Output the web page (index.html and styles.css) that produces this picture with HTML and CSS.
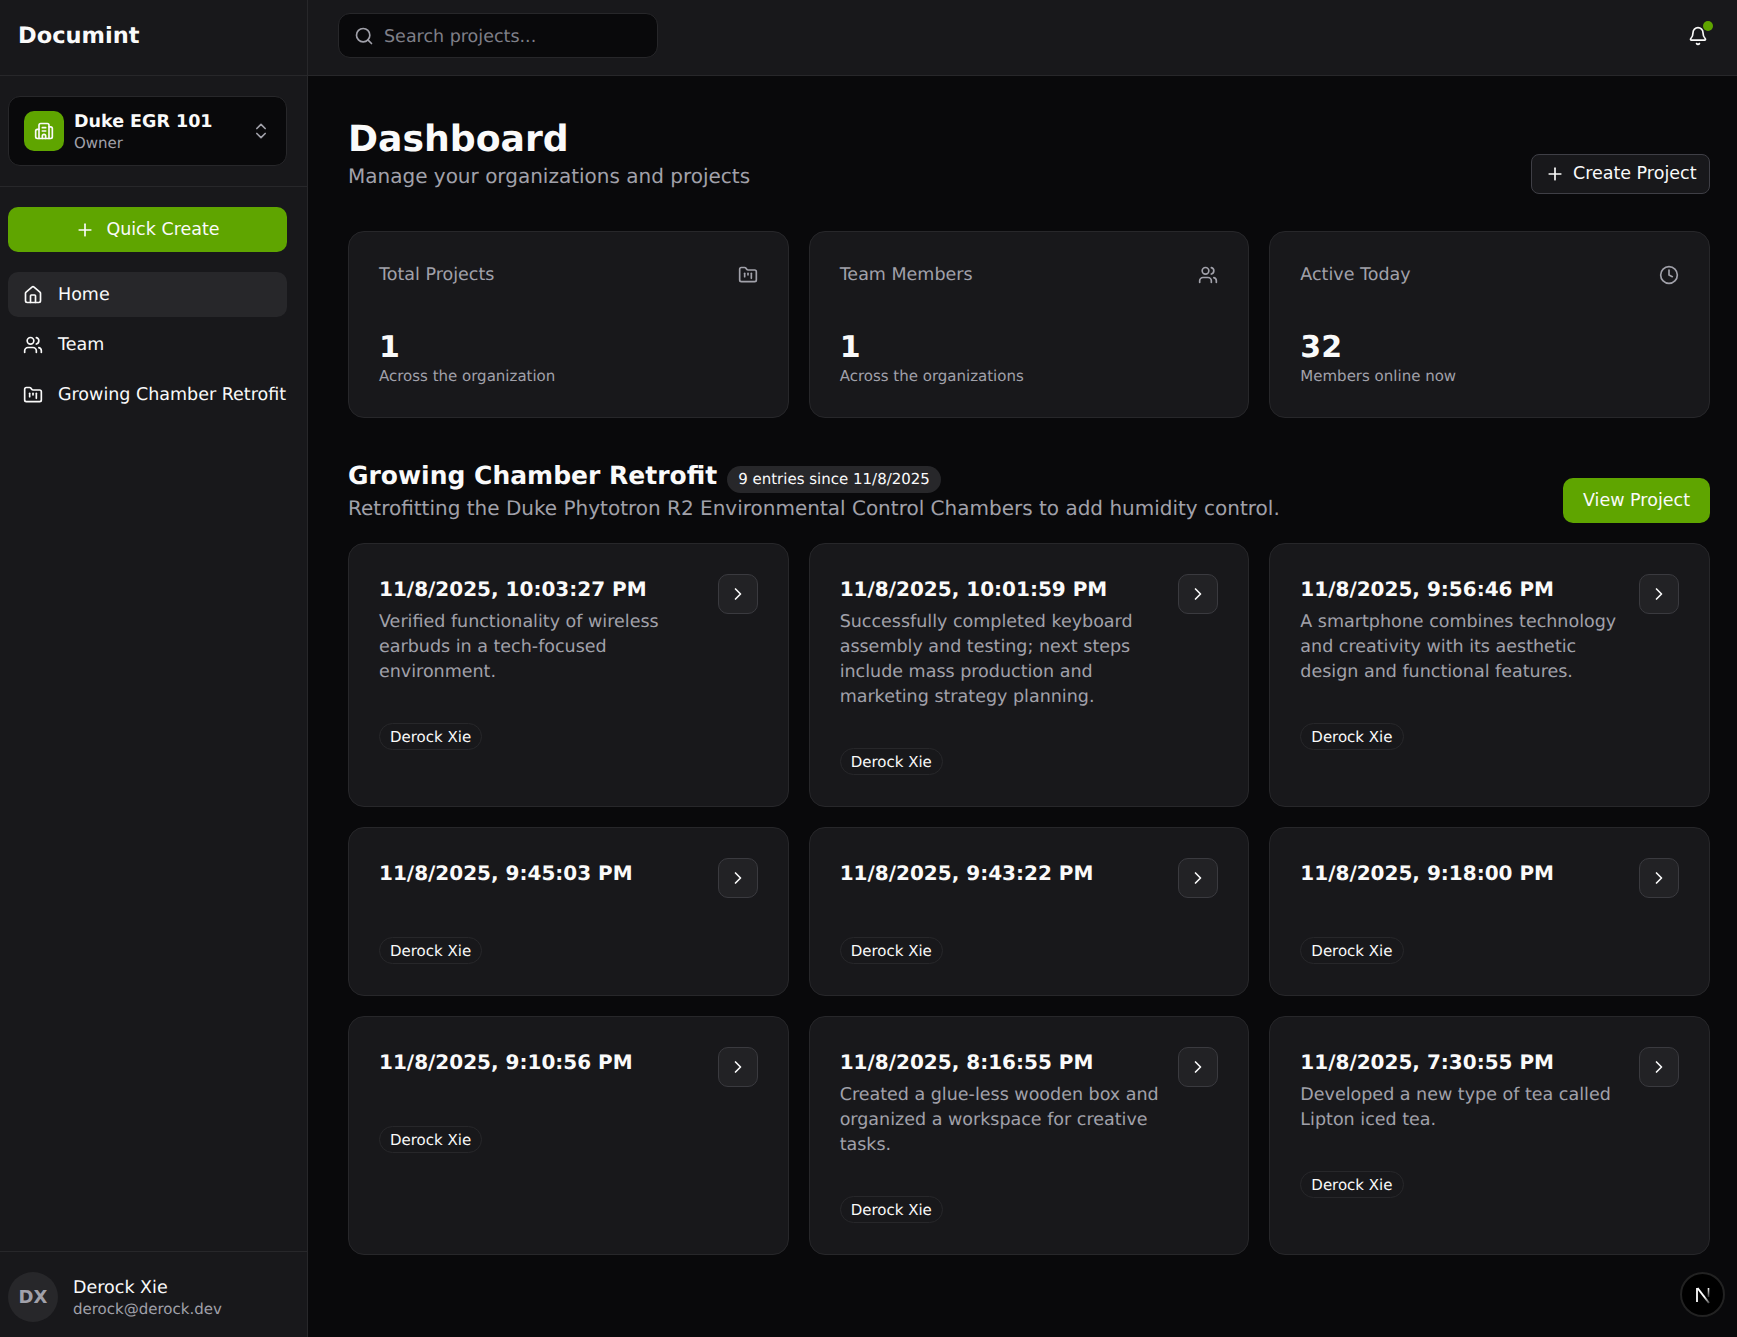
FILE: index.html
```html
<!DOCTYPE html>
<html lang="en">
<head>
<meta charset="utf-8">
<title>Documint</title>
<link rel="stylesheet" href="styles.css">
</head>
<body>
<svg class="sprite" width="0" height="0">
  <symbol id="i-building" viewBox="0 0 24 24"><path d="M10 12h4"/><path d="M10 8h4"/><path d="M14 21v-3a2 2 0 0 0-4 0v3"/><path d="M6 10H4a2 2 0 0 0-2 2v7a2 2 0 0 0 2 2h16a2 2 0 0 0 2-2V9a2 2 0 0 0-2-2h-2"/><path d="M6 21V5a2 2 0 0 1 2-2h8a2 2 0 0 1 2 2v16"/></symbol>
  <symbol id="i-updown" viewBox="0 0 24 24"><path d="m7 15 5 5 5-5"/><path d="m7 9 5-5 5 5"/></symbol>
  <symbol id="i-plus" viewBox="0 0 24 24"><path d="M5 12h14"/><path d="M12 5v14"/></symbol>
  <symbol id="i-home" viewBox="0 0 24 24"><path d="M15 21v-8a1 1 0 0 0-1-1h-4a1 1 0 0 0-1 1v8"/><path d="M3 10a2 2 0 0 1 .709-1.528l7-5.999a2 2 0 0 1 2.582 0l7 5.999A2 2 0 0 1 21 10v9a2 2 0 0 1-2 2H5a2 2 0 0 1-2-2z"/></symbol>
  <symbol id="i-users" viewBox="0 0 24 24"><path d="M16 21v-2a4 4 0 0 0-4-4H6a4 4 0 0 0-4 4v2"/><circle cx="9" cy="7" r="4"/><path d="M22 21v-2a4 4 0 0 0-3-3.87"/><path d="M16 3.13a4 4 0 0 1 0 7.75"/></symbol>
  <symbol id="i-folder" viewBox="0 0 24 24"><path d="M4 20h16a2 2 0 0 0 2-2V8a2 2 0 0 0-2-2h-7.93a2 2 0 0 1-1.66-.9l-.82-1.2A2 2 0 0 0 7.93 3H4a2 2 0 0 0-2 2v13c0 1.1.9 2 2 2Z"/><path d="M8 10v4"/><path d="M12 10v2"/><path d="M16 10v6"/></symbol>
  <symbol id="i-search" viewBox="0 0 24 24"><path d="m21 21-4.34-4.34"/><circle cx="11" cy="11" r="8"/></symbol>
  <symbol id="i-bell" viewBox="0 0 24 24"><path d="M10.268 21a2 2 0 0 0 3.464 0"/><path d="M3.262 15.326A1 1 0 0 0 4 17h16a1 1 0 0 0 .74-1.673C19.41 13.956 18 12.499 18 8A6 6 0 0 0 6 8c0 4.499-1.411 5.956-2.738 7.326"/></symbol>
  <symbol id="i-clock" viewBox="0 0 24 24"><circle cx="12" cy="12" r="10"/><path d="M12 6v6l4 2"/></symbol>
  <symbol id="i-chev" viewBox="0 0 24 24"><path d="m9 18 6-6-6-6"/></symbol>
</svg>

<div class="app">
  <aside class="sidebar">
    <div class="brand">Documint</div>
    <div class="org-wrap">
      <div class="org">
        <span class="org-logo"><svg class="icon ic-20"><use href="#i-building"/></svg></span>
        <div class="org-text">
          <div class="org-name">Duke EGR 101</div>
          <div class="org-role">Owner</div>
        </div>
        <svg class="icon ic-20 muted"><use href="#i-updown"/></svg>
      </div>
    </div>
    <div class="side-body">
      <button class="quick"><svg class="icon ic-20"><use href="#i-plus"/></svg>Quick Create</button>
      <nav class="nav">
        <a class="nav-item active"><svg class="icon ic-20"><use href="#i-home"/></svg>Home</a>
        <a class="nav-item"><svg class="icon ic-20"><use href="#i-users"/></svg>Team</a>
        <a class="nav-item"><svg class="icon ic-20"><use href="#i-folder"/></svg>Growing Chamber Retrofit</a>
      </nav>
    </div>
    <div class="user">
      <span class="avatar">DX</span>
      <div class="user-text">
        <div class="user-name">Derock Xie</div>
        <div class="user-mail">derock@derock.dev</div>
      </div>
    </div>
  </aside>

  <div class="content">
    <header class="topbar">
      <label class="search"><svg class="icon ic-20 muted"><use href="#i-search"/></svg><span class="search-text">Search projects...</span></label>
      <span class="bell"><svg class="icon ic-20"><use href="#i-bell"/></svg><i class="dot"></i></span>
    </header>
    <main class="main">
      <section class="page-head">
        <div>
          <h1>Dashboard</h1>
          <p class="sub page-sub">Manage your organizations and projects</p>
        </div>
        <button class="outline"><svg class="icon ic-20"><use href="#i-plus"/></svg>Create Project</button>
      </section>

      <section class="grid stats">
        <div class="card stat">
          <div class="stat-top"><span>Total Projects</span><svg class="icon ic-20 muted"><use href="#i-folder"/></svg></div>
          <div class="stat-num">1</div>
          <div class="stat-note">Across the organization</div>
        </div>
        <div class="card stat">
          <div class="stat-top"><span>Team Members</span><svg class="icon ic-20 muted"><use href="#i-users"/></svg></div>
          <div class="stat-num">1</div>
          <div class="stat-note">Across the organizations</div>
        </div>
        <div class="card stat">
          <div class="stat-top"><span>Active Today</span><svg class="icon ic-20 muted"><use href="#i-clock"/></svg></div>
          <div class="stat-num">32</div>
          <div class="stat-note">Members online now</div>
        </div>
      </section>

      <section class="project-head">
        <div>
          <div class="project-title"><h2>Growing Chamber Retrofit</h2><span class="pill">9 entries since 11/8/2025</span></div>
          <p class="sub project-sub">Retrofitting the Duke Phytotron R2 Environmental Control Chambers to add humidity control.</p>
        </div>
        <button class="primary">View Project</button>
      </section>

      <section class="grid entries">
        <article class="card entry">
          <div class="entry-body"><h3>11/8/2025, 10:03:27 PM</h3><p>Verified functionality of wireless earbuds in a tech-focused environment.</p><span class="tag">Derock Xie</span></div>
          <button class="go"><svg class="icon ic-20"><use href="#i-chev"/></svg></button>
        </article>
        <article class="card entry">
          <div class="entry-body"><h3>11/8/2025, 10:01:59 PM</h3><p>Successfully completed keyboard assembly and testing; next steps include mass production and marketing strategy planning.</p><span class="tag">Derock Xie</span></div>
          <button class="go"><svg class="icon ic-20"><use href="#i-chev"/></svg></button>
        </article>
        <article class="card entry">
          <div class="entry-body"><h3>11/8/2025, 9:56:46 PM</h3><p>A smartphone combines technology and creativity with its aesthetic design and functional features.</p><span class="tag">Derock Xie</span></div>
          <button class="go"><svg class="icon ic-20"><use href="#i-chev"/></svg></button>
        </article>
        <article class="card entry">
          <div class="entry-body"><h3 class="solo">11/8/2025, 9:45:03 PM</h3><span class="tag">Derock Xie</span></div>
          <button class="go"><svg class="icon ic-20"><use href="#i-chev"/></svg></button>
        </article>
        <article class="card entry">
          <div class="entry-body"><h3 class="solo">11/8/2025, 9:43:22 PM</h3><span class="tag">Derock Xie</span></div>
          <button class="go"><svg class="icon ic-20"><use href="#i-chev"/></svg></button>
        </article>
        <article class="card entry">
          <div class="entry-body"><h3 class="solo">11/8/2025, 9:18:00 PM</h3><span class="tag">Derock Xie</span></div>
          <button class="go"><svg class="icon ic-20"><use href="#i-chev"/></svg></button>
        </article>
        <article class="card entry">
          <div class="entry-body"><h3 class="solo">11/8/2025, 9:10:56 PM</h3><span class="tag">Derock Xie</span></div>
          <button class="go"><svg class="icon ic-20"><use href="#i-chev"/></svg></button>
        </article>
        <article class="card entry">
          <div class="entry-body"><h3>11/8/2025, 8:16:55 PM</h3><p>Created a glue-less wooden box and organized a workspace for creative tasks.</p><span class="tag">Derock Xie</span></div>
          <button class="go"><svg class="icon ic-20"><use href="#i-chev"/></svg></button>
        </article>
        <article class="card entry">
          <div class="entry-body"><h3>11/8/2025, 7:30:55 PM</h3><p>Developed a new type of tea called Lipton iced tea.</p><span class="tag">Derock Xie</span></div>
          <button class="go"><svg class="icon ic-20"><use href="#i-chev"/></svg></button>
        </article>
      </section>
    </main>
  </div>
</div>

<div class="dev-badge"><svg width="22" height="22" viewBox="0 0 22 22" fill="none"><defs><linearGradient id="nd" x1="5" y1="4" x2="17" y2="19" gradientUnits="userSpaceOnUse"><stop offset="0.6" stop-color="#fff"/><stop offset="1" stop-color="#fff" stop-opacity="0.3"/></linearGradient><linearGradient id="ns" x1="0" y1="4" x2="0" y2="13" gradientUnits="userSpaceOnUse"><stop offset="0" stop-color="#fff"/><stop offset="1" stop-color="#fff" stop-opacity="0.2"/></linearGradient></defs><path d="M5 4V18" stroke="#fff" stroke-width="1.8"/><path d="M5.5 4L17 19" stroke="url(#nd)" stroke-width="2"/><path d="M16.5 4V13" stroke="url(#ns)" stroke-width="1.6"/></svg></div>
</body>
</html>
```
FILE: styles.css
```css
* { box-sizing: border-box; }
html, body { margin: 0; height: 100%; }
body {
  background: #09090b;
  color: #fafafa;
  font-family: "DejaVu Sans", sans-serif;
  font-size: 17.5px;
  text-rendering: geometricPrecision;
  overflow: hidden;
}
h1, h2, h3, p { margin: 0; }
button { font-family: inherit; color: inherit; cursor: pointer; }
.sprite { position: absolute; }

.icon { display: block; flex: none; fill: none; stroke: currentColor; stroke-width: 2; stroke-linecap: round; stroke-linejoin: round; }
.ic-20 { width: 20px; height: 20px; }
.muted { color: #a1a1aa; }

.app { display: flex; height: 1337px; }

/* sidebar */
.sidebar { width: 308px; flex: none; display: flex; flex-direction: column; background: #18181b; border-right: 1px solid #27272a; }
.brand { height: 76px; flex: none; padding: 0 18px 4px; display: flex; align-items: center; font-size: 22.5px; font-weight: 700; border-bottom: 1px solid #27272a; }
.org-wrap { height: 111px; flex: none; padding: 20px 20px 20px 8px; border-bottom: 1px solid #27272a; }
.org { height: 70px; display: flex; align-items: center; padding: 0 15px; gap: 10px; background: #09090b; border: 1px solid #27272a; border-radius: 12px; }
.org-logo { width: 40px; height: 40px; flex: none; display: flex; align-items: center; justify-content: center; border-radius: 10px; background: #5fa500; }
.org-text { flex: 1; min-width: 0; padding-top: 3px; }
.org-name { font-size: 17.5px; font-weight: 700; line-height: 22px; }
.org-role { font-size: 15px; line-height: 21px; color: #a1a1aa; }

.side-body { flex: 1; padding: 20px 20px 20px 8px; }
.quick { width: 100%; height: 45px; display: flex; align-items: center; justify-content: center; gap: 11px; padding: 0 0 2px; background: #5fa500; border: 0; border-radius: 10px; font-size: 17.5px; }
.quick .icon { margin-top: 2px; }
.nav { margin-top: 20px; display: flex; flex-direction: column; gap: 5px; }
.nav-item { height: 45px; display: flex; align-items: center; gap: 15px; padding: 0 15px; font-size: 17.5px; border-radius: 10px; white-space: nowrap; }
.nav-item.active { background: #27272a; }

.user { height: 86px; flex: none; display: flex; align-items: center; gap: 15px; padding: 5px 8px 0; border-top: 1px solid #27272a; }
.user-text { padding-top: 3px; }
.avatar { width: 50px; height: 50px; flex: none; display: flex; align-items: center; justify-content: center; border-radius: 50%; background: #27272a; color: #a1a1aa; font-size: 18px; font-weight: 700; }
.user-name { font-size: 17.5px; line-height: 22px; }
.user-mail { font-size: 15px; line-height: 21px; color: #a1a1aa; }

/* top bar */
.content { flex: 1; min-width: 0; display: flex; flex-direction: column; }
.topbar { height: 76px; flex: none; display: flex; align-items: center; justify-content: space-between; padding: 0 29px 4px 30px; background: #18181b; border-bottom: 1px solid #27272a; }
.search { width: 320px; height: 45px; display: flex; align-items: center; gap: 10px; padding: 0 15px; background: #09090b; border: 1px solid #27272a; border-radius: 12px; color: #7f7f88; font-size: 17.5px; }
.search-text { padding-top: 2px; }
.bell { position: relative; display: block; }
.dot { position: absolute; top: -5px; right: -5px; width: 10px; height: 10px; border-radius: 50%; background: #5fa500; }

/* main */
.main { flex: 1; padding: 40px 27px 0 40px; }
.page-head { display: flex; justify-content: space-between; align-items: flex-end; }
h1 { font-size: 36.2px; line-height: 44px; font-weight: 700; padding-top: 1px; }
.sub { font-size: 20px; line-height: 28px; color: #a1a1aa; }
.page-sub { margin-top: 1px; padding-bottom: 4px; }
.outline { height: 40px; display: flex; align-items: center; gap: 8px; padding: 0 12.5px 2px; background: #18181b; border: 1px solid #3f3f46; border-radius: 8px; font-size: 17.5px; }
.outline .icon { margin-top: 2px; }
.grid { display: grid; grid-template-columns: repeat(3, 1fr); gap: 20px; }
.card { background: #18181b; border: 1px solid #27272a; border-radius: 16px; padding: 30px; }
.stats { margin-top: 37px; }
.stat { height: 187px; }
.stat-top { display: flex; justify-content: space-between; color: #a1a1aa; font-size: 17.5px; line-height: 26px; }
.stat-top .icon { margin-top: 3px; }
.stat-num { margin-top: 42px; font-size: 30px; line-height: 36px; font-weight: 700; }
.stat-note { font-size: 15px; line-height: 20px; color: #a1a1aa; }

.project-head { margin-top: 41px; margin-bottom: 21px; display: flex; justify-content: space-between; align-items: flex-end; }
.project-title { display: flex; align-items: baseline; gap: 10px; }
h2 { font-size: 25px; line-height: 34px; font-weight: 700; }
.project-sub { margin-top: 1px; }
.pill { padding: 3px 11px; background: #27272a; border-radius: 999px; font-size: 15px; line-height: 21px; }
.primary { height: 45px; margin-bottom: -1px; padding: 0 20px 2px; background: #5fa500; border: 0; border-radius: 10px; font-size: 17.5px; }

.entries { grid-template-rows: 264px 169px 239px; }
.entry { display: flex; justify-content: space-between; gap: 16px; }
.entry-body { flex: 1; min-width: 0; display: flex; flex-direction: column; align-items: flex-start; }
h3 { font-size: 20px; line-height: 30px; font-weight: 700; white-space: nowrap; margin-bottom: 6px; }
h3.solo { min-height: 40px; margin-bottom: 0; }
.entry p { font-size: 17.5px; line-height: 25px; color: #a1a1aa; margin-bottom: -1px; }
.tag { margin-top: 39px; height: 27px; display: flex; align-items: center; padding: 0 10px; border: 1px solid #27272a; border-radius: 999px; font-size: 15px; }
.go { width: 40px; height: 40px; flex: none; display: flex; align-items: center; justify-content: center; padding: 0; background: #222225; border: 1px solid #3a3a3f; border-radius: 10px; }

.dev-badge { position: fixed; left: 1680px; top: 1272px; width: 45px; height: 45px; display: flex; align-items: center; justify-content: center; border-radius: 50%; background: #000; border: 2px solid #222; }
```
